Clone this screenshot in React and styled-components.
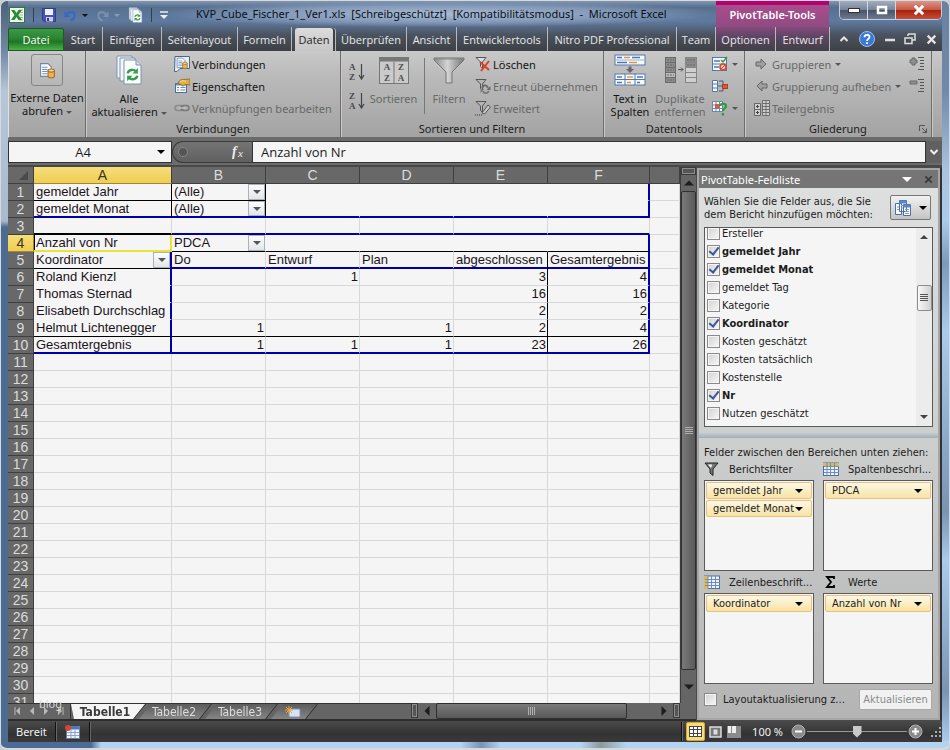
import React from 'react';
import styled, { createGlobalStyle, css } from 'styled-components';

const ui = "'Noto Sans', 'Open Sans', sans-serif";
const tabFont = "'Open Sans', 'Noto Sans', sans-serif";
const paneFont = "'DejaVu Sans Condensed', 'DejaVu Sans', sans-serif";
const cellFont = "'Liberation Sans', Arial, sans-serif";

const GlobalStyle = createGlobalStyle`
  * { box-sizing: border-box; }
  body { margin: 0; background: #c9cdd2; overflow: hidden; }
  button, input { font: inherit; color: inherit; margin: 0; padding: 0; }
  button { background: none; border: 0; }
  svg { display: block; flex: none; }
`;

/* ---------- window ---------- */

const Window = styled.div`
  height: 100vh;
  display: flex;
  flex-direction: column;
  padding: 0 7px 6px;
  border: 1px solid #d5dae0;
  border-bottom-width: 2px;
  border-radius: 7px;
  font-family: ${ui};
  font-size: 11px;
  color: #1c1c1c;
  background:
    linear-gradient(90deg, #4c6c96 0, #4c6c96 90px, #b4d3f0 100px, #b4d3f0 460px, #7893b4 480px, #b4d3f0 500px, #b4d3f0 580px, #8a9a9a 600px, #b4d3f0 625px, #b4d3f0) 0 100% / 100% 7px no-repeat,
    linear-gradient(180deg, #4d5f78 0, #7187a5 50px, #b7c6d8 90px, #aab9cc 220px, #4b6b92 226px, #4b6b92 100%) 0 0 / 8px 100% no-repeat,
    linear-gradient(180deg, #6b81a0 0, #7189ab 90px, #aac3df 170px, #a9cbee 220px, #7b9abd 262px, #a9cbee 330px, #7a94b3 510px, #a9cbee 560px, #7a94b3 690px, #a9cbee 740px) 100% 0 / 8px 100% no-repeat,
    #5b7392;
`;

const Chrome = styled.header`
  flex: none;
  background: linear-gradient(180deg, #8596af 0, #56708f 6px, #5f7aa0 20px, #4a535f 34px, #3e4044 50px);
`;

const TitleBar = styled.div`
  display: flex;
  height: 26px;
`;

const QuickAccess = styled.div`
  display: flex;
  flex: none;
  align-items: center;
  gap: 8px;
  width: 157px;
  padding: 2px 0 0 1px;
`;

const QuickButton = styled.button`
  display: flex;
  align-items: center;
  gap: 5px;
  opacity: ${p => (p.$dim ? 0.45 : 1)};
`;

const Divider = styled.i`
  width: 1px;
  height: 14px;
  background: #aab4c2;
  border-right: 1px solid #333d4b;
`;

const Title = styled.h1`
  flex: 1;
  min-width: 0;
  margin: 0;
  padding: 1px 0 0 31px;
  font-size: 11px;
  line-height: 24px;
  font-weight: 400;
  white-space: pre;
  color: #0a0f18;
  background: radial-gradient(ellipse at 50% 50%, #a9bbd3 0, #8399b8 45%, transparent 72%);
`;

const PivotTitle = styled.div`
  flex: none;
  width: 113px;
  height: 29px;
  margin-bottom: -3px;
  border-top: 4px solid #b5006e;
  background: linear-gradient(180deg, #a94d8e, #8d4a80);
  color: #fff;
  font-weight: 600;
  font-size: 11px;
  line-height: 20px;
  text-align: center;
`;

const WindowButtons = styled.div`
  display: flex;
  flex: none;
  width: 103px;
  height: 19px;
  margin: 0 0 0 10px;
  border: 1px solid #c5cbd5;
  border-top: 0;
  border-radius: 0 0 5px 5px;
  overflow: hidden;
`;

const WindowButton = styled.button`
  flex: ${p => (p.$close ? 46 : 28)};
  display: grid;
  place-items: center;
  border-right: 1px solid #d3d7de;
  background: ${p =>
    p.$close
      ? 'linear-gradient(180deg, #d9968a 0, #c55a46 48%, #a8220f 52%, #c4503a 100%)'
      : 'linear-gradient(180deg, #a3adbd 0, #77849a 48%, #4a5468 52%, #6d7a90 100%)'};
  &:last-child { border: 0; }
`;

const TabRow = styled.nav`
  display: flex;
  height: 24px;
  font-family: ${tabFont};
  color: #e6e8eb;
`;

const Tab = styled.button`
  flex: none;
  width: ${p => p.$w}px;
  padding-top: 1px;
  text-align: center;
  white-space: nowrap;
  border-right: 1px solid #b5b8bd;
  ${p => p.$pivot && css`background: linear-gradient(180deg, #854a7c, #5a4560 45%, #414046);`}
  ${p =>
    p.$active &&
    css`
      margin: 1px 3px 0 3px;
      padding: 0;
      background: linear-gradient(180deg, #dcdcdc, #c6c6c6);
      color: #1d1d1d;
      border-radius: 3px 3px 0 0;
      border: 0;
      box-shadow: 2px 0 0 #3e4044, 3px 0 0 #b5b8bd;
    `}
  ${p =>
    p.$file &&
    css`
      background: linear-gradient(180deg, #3c9a45 0, #2b8432 45%, #1f7526 60%, #4bb04a 100%);
      border: 1px solid #1c5a20;
      border-radius: 2px 2px 0 0;
      color: #fff;
      margin-top: 1px;
      padding: 0;
    `}
`;

const TabTools = styled.div`
  flex: 1;
  display: flex;
  justify-content: space-between;
  align-items: center;
  padding: 0 5px 0 9px;
`;

/* ---------- ribbon ---------- */

const Ribbon = styled.section`
  flex: none;
  display: flex;
  height: 87px;
  border-left: 1px solid #e0e0e0;
  border-bottom: 1px solid #6b6b6b;
  background: linear-gradient(180deg, #c9c9c9 0, #bababa 30%, #a3a3a3 100%);
`;

const Group = styled.div`
  flex: none;
  display: flex;
  flex-direction: column;
  width: ${p => p.$w}px;
  border-right: 1px solid #6d6d6d;
  box-shadow: 1px 0 0 #c9c9c9;
  padding-top: 2px;
`;

const GroupBody = styled.div`
  display: flex;
  height: 67px;
  padding-left: ${p => p.$pad || 0}px;
`;

const GroupLabel = styled.div`
  display: flex;
  justify-content: center;
  line-height: 17px;
  position: relative;
`;

const Launcher = styled.span`
  position: absolute;
  right: 4px;
  top: 5px;
`;

const BigButton = styled.button`
  display: flex;
  flex-direction: column;
  align-items: center;
  flex: none;
  width: ${p => p.$w}px;
  line-height: 13px;
  text-align: center;
  white-space: nowrap;
  color: ${p => (p.$off ? '#686868' : '#151515')};
`;

const IconSlot = styled.span`
  display: grid;
  place-items: center;
  height: ${p => (p.$framed ? 32 : 34)}px;
  width: 32px;
  margin-bottom: 5px;
  ${p => p.$framed && css`border: 1px solid #858585; border-radius: 3px; margin-top: 1px;`}
`;

const Stack = styled.div`
  display: flex;
  flex-direction: column;
  flex: ${p => (p.$grow ? 1 : 'none')};
  gap: ${p => p.$gap || 0}px;
  padding: ${p => p.$pad || 0};
`;

const SmallButton = styled.button`
  display: flex;
  align-items: center;
  gap: 2px;
  height: 22px;
  white-space: nowrap;
  color: ${p => (p.$off ? '#686868' : '#151515')};
`;

const Rule = styled.i`
  width: 1px;
  height: 56px;
  margin: 5px 5px 0 2px;
  background: #777;
`;

const Caret = styled.i`
  display: inline-block;
  flex: none;
  border: solid transparent;
  border-width: ${p => p.$s || 3}px ${p => p.$s || 3}px 0;
  border-top-color: ${p => p.$c || '#555'};
  vertical-align: middle;
  margin-left: ${p => p.$gap || 0}px;
`;

/* ---------- formula bar ---------- */

const FormulaBar = styled.div`
  flex: none;
  display: flex;
  height: 29px;
  padding: 3px 0 2px;
  background: #6b6b6b;
  border-bottom: 2px solid #484848;
  font-family: ${tabFont};
`;

const NameBox = styled.div`
  display: flex;
  align-items: center;
  width: 164px;
  padding-right: 6px;
  background: #f5f5f5;
  border: 1px solid #333;
  input {
    flex: 1;
    min-width: 0;
    border: 0;
    background: none;
    text-align: center;
    font-size: 13px;
  }
`;

const FxArea = styled.div`
  display: flex;
  align-items: center;
  justify-content: space-between;
  width: 80px;
  padding: 0 6px 0 4px;
  border-radius: 11px 0 0 11px;
  border: 1px solid #3b3b3b;
  border-right: 0;
  background: linear-gradient(180deg, #747474, #606060);
`;

const FormulaInput = styled.input`
  flex: 1;
  min-width: 0;
  && {
    padding-left: 8px;
    font-size: 13px;
  }
  border: 1px solid #333;
  background: #f5f5f5;
`;

const Expand = styled.button`
  width: 16px;
  display: grid;
  place-items: center;
  background: #606060;
`;

/* ---------- sheet ---------- */

const Workspace = styled.main`
  flex: 1;
  min-height: 0;
  display: flex;
  background: #666;
`;

const Book = styled.section`
  flex: 1;
  min-width: 0;
  display: flex;
  flex-direction: column;
`;

const BookTop = styled.div`
  flex: 1;
  min-height: 0;
  display: flex;
`;

const SheetView = styled.div`
  flex: 1;
  min-width: 0;
  overflow: hidden;
  background: #f5f5f5;
`;

const Grid = styled.table`
  width: 100%;
  table-layout: fixed;
  border-collapse: separate;
  border-spacing: 0;
  font-family: ${cellFont};
  font-size: 13px;
  line-height: 15px;
  color: #1a1420;
`;

const ColHead = styled.th`
  height: 17px;
  padding: 0;
  font-size: 14px;
  line-height: 16px;
  font-weight: 400;
  color: ${p => (p.$on ? '#3a3320' : '#dcdcdc')};
  background: ${p => (p.$on ? 'linear-gradient(180deg, #f5de7a, #f0cd52)' : '#686868')};
  border-right: 1px solid #3f3f3f;
  border-bottom: 1px solid ${p => (p.$on ? '#a8862c' : '#3f3f3f')};
`;

const RowHead = styled(ColHead)`
  ${p => p.$on && css`border-right-color: #a8862c;`}
`;

const lineColors = { k: '#000', K: '#000', b: '#0000a8', g: '#d6d8da', n: '#f5f5f5', y: '#e8e337' };
const isThick = code => 'Kby'.includes(code);
const line = code => `${isThick(code) ? 2 : 1}px solid ${lineColors[code]}`;

const Cell = styled.td`
  height: 17px;
  padding: 0 ${p => (p.$num ? 1 : 2)}px;
  text-align: ${p => (p.$num ? 'right' : 'left')};
  white-space: nowrap;
  overflow: hidden;
  border-right: ${p => line(p.$r)};
  border-bottom: ${p => line(p.$b)};
  ${p => p.$active && css`box-shadow: inset 1px 0 0 #000;`}
  line-height: ${p => (isThick(p.$b) ? 15 : 16)}px;
`;

const CellBox = styled.div`
  display: flex;
  justify-content: space-between;
  height: ${p => (p.$thick ? 15 : 16)}px;
  margin-right: -2px;
`;

const DropButton = styled.button`
  display: grid;
  place-items: center;
  width: 17px;
  border: 1px solid #a9b1ba;
  background: linear-gradient(180deg, #fdfdfd, #e2e5e9);
`;

const VScroll = styled.div`
  flex: none;
  display: flex;
  flex-direction: column;
  width: 16px;
  background: #656565;
  border-left: 1px solid #3d3d3d;
`;

const Splitter = styled.i`
  display: block;
  flex: none;
  width: ${p => (p.$tall ? 7 : 15)}px;
  height: ${p => (p.$tall ? 15 : 8)}px;
  border: 2px solid #8c8c8c;
  outline: 1px solid #3a3a3a;
  outline-offset: -1px;
  background: #555;
`;

const ScrollButton = styled.button`
  display: grid;
  place-items: center;
  flex: none;
  width: ${p => p.$w || 15}px;
  height: ${p => p.$h || 16}px;
  ${p => p.$end && css`justify-content: end; padding-right: 4px;`}
`;

const Thumb = styled.div`
  display: grid;
  place-items: center;
  flex: ${p => (p.$w ? `0 0 ${p.$w}px` : '1')};
  border: 1px solid #2f2f2f;
  border-radius: 2px;
  background: linear-gradient(${p => (p.$w ? '180deg' : '90deg')}, #7a7a7a, #595959);
`;

const BookBottom = styled.div`
  flex: none;
  display: flex;
  height: 18px;
  background: #656565;
  border-bottom: 2px solid #2d2d2d;
`;

const SheetNav = styled.div`
  position: relative;
  display: flex;
  flex: none;
  align-items: center;
  justify-content: space-between;
  width: 63px;
  padding: 0 6px 2px;
  border-top: 1px solid #333;
  border-right: 1px solid #333;
`;

const Watermark = styled.span`
  position: absolute;
  left: 31px;
  top: -7px;
  font-size: 11px;
  line-height: 14px;
  color: #d8d8d8;
`;

const SheetTabs = styled.div`
  flex: 1;
  display: flex;
  border-top: 1px solid #333;
  font-family: ${paneFont};
  filter: drop-shadow(1px 0 0 #2b2b2b);
`;

const SheetTab = styled.button`
  width: ${p => p.$w}px;
  height: 15px;
  margin-right: -6px;
  padding-right: ${p => (p.$on ? 6 : 2)}px;
  line-height: 14px;
  font-size: 12px;
  font-weight: ${p => (p.$on ? 700 : 400)};
  color: ${p => (p.$on ? '#3a3a3a' : '#dcdcdc')};
  background: ${p => (p.$on ? '#f5f5f5' : 'linear-gradient(180deg, #5c5c5c, #858585)')};
  clip-path: ${p =>
    p.$on
      ? 'polygon(0 0, 100% 0, calc(100% - 12px) 100%, 3px 100%)'
      : 'polygon(12px 0, 100% 0, calc(100% - 12px) 100%, 0 100%)'};
  display: flex;
  justify-content: center;
  align-items: center;
`;

/* ---------- field list ---------- */

const Pane = styled.aside`
  flex: none;
  display: flex;
  flex-direction: column;
  width: 246px;
  border: 1px solid #4a4a4a;
  border-right: 2px solid #333;
  background: linear-gradient(180deg, #dfe0e0 0, #cfd0d0 45%, #b4b4b4 100%);
  box-shadow: inset 0 0 0 2px #a6a6a6;
  padding: 2px;
  font-family: ${paneFont};
`;

const PaneHead = styled.div`
  display: flex;
  align-items: center;
  gap: 12px;
  height: 18px;
  padding: 0 5px 0 2px;
  background: #757575;
  color: #fff;
  font-family: ${ui};
  h2 { flex: 1; margin: 0; font-size: 11px; font-weight: 400; }
`;

const PaneBody = styled.div`
  flex: 1;
  display: flex;
  flex-direction: column;
  padding: 7px 5px 0;
`;

const Prompt = styled.div`
  display: flex;
  justify-content: space-between;
  height: 32px;
  line-height: 13px;
  white-space: nowrap;
  p { margin: 0; }
`;

const LayoutButton = styled.button`
  display: flex;
  align-items: center;
  justify-content: center;
  gap: 8px;
  width: 41px;
  height: 25px;
  margin-right: 2px;
  border: 1px solid #777;
  border-radius: 2px;
  background: linear-gradient(180deg, #f2f2f2, #c4c4c4);
`;

const FieldBox = styled.div`
  display: flex;
  height: 200px;
  border: 1px solid #5a5a5a;
  background: #f5f5f5;
  overflow: hidden;
`;

const Fields = styled.ul`
  flex: 1;
  list-style: none;
  margin: -4px 0 0;
  padding: 0 0 0 2px;
`;

const Field = styled.li`
  height: 18px;
  label {
    display: flex;
    align-items: center;
    gap: 2px;
    height: 18px;
    font-weight: ${p => (p.$on ? 700 : 400)};
  }
`;

const Check = styled.input.attrs({ type: 'checkbox' })`
  appearance: none;
  flex: none;
  display: grid;
  place-items: center;
  width: 13px;
  height: 13px;
  border: 1px solid #8a8a8a;
  background: linear-gradient(135deg, #d2d2d2, #f8f8f8);
  box-shadow: inset 0 0 0 1px #f4f4f4;
  &:checked::after {
    content: '';
    width: 4px;
    height: 8px;
    border: solid #3e539b;
    border-width: 0 2px 2px 0;
    transform: rotate(38deg);
    margin-top: -2px;
  }
`;

const FieldScroll = styled.div`
  display: flex;
  flex-direction: column;
  align-items: center;
  justify-content: space-between;
  width: 16px;
  padding: 5px 0;
  background: #ececec;
`;

const FieldThumb = styled.div`
  display: grid;
  place-items: center;
  width: 15px;
  height: 26px;
  margin-bottom: 58px;
  border: 1px solid #8e8e8e;
  border-radius: 2px;
  background: linear-gradient(90deg, #f8f8f8, #d0d0d0);
`;

const Bar = styled.hr`
  width: calc(100% + 10px);
  margin: 6px -5px 7px;
  height: 5px;
  border: 0;
  flex: none;
  background: linear-gradient(180deg, #c4cbd2, #a4adb6);
`;

const DragHint = styled.p`
  margin: 0;
  line-height: 15px;
  white-space: nowrap;
`;

const Areas = styled.div`
  display: grid;
  grid-template-columns: 110px 110px;
  column-gap: 9px;
`;

const AreaHead = styled.h3`
  display: flex;
  align-items: center;
  gap: 9px;
  height: 20px;
  margin: 0;
  padding-bottom: 2px;
  font-size: 11px;
  font-weight: 400;
  white-space: nowrap;
  span { width: 16px; }
`;

const AreaBox = styled.div`
  height: 91px;
  margin-bottom: 2px;
  padding: 1px;
  border: 1px solid #5a5a5a;
  background: #f5f5f5;
`;

const Chip = styled.button`
  display: flex;
  align-items: center;
  justify-content: space-between;
  width: 100%;
  height: 17px;
  margin-bottom: 1px;
  padding: 0 8px 0 6px;
  border: 1px solid #ecc07a;
  border-radius: 2px;
  background: linear-gradient(180deg, #fdf8e6, #f8e3a4);
  white-space: nowrap;
`;

const PaneFoot = styled.div`
  display: flex;
  align-items: center;
  gap: 6px;
  margin-top: 3px;
  white-space: nowrap;
  label { flex: 1; }
  button {
    width: 73px;
    height: 21px;
    margin-right: 1px;
    border: 1px solid #a9a9a9;
    border-radius: 2px;
    background: #f1f1f1;
    color: #8a8a8a;
  }
`;

/* ---------- status bar ---------- */

const StatusBar = styled.footer`
  flex: none;
  display: flex;
  align-items: center;
  gap: 8px;
  height: 21px;
  padding-left: 8px;
  background: linear-gradient(180deg, #4a4a4a, #333 60%, #3a3a3a);
  color: #f0f0f0;
`;

const StatusSep = styled.i`
  width: 2px;
  height: 19px;
  background: #111;
  border-right: 1px solid #666;
`;

const ViewButton = styled.button`
  display: grid;
  place-items: center;
  width: ${p => (p.$on ? 19 : 15)}px;
  height: 19px;
  border-radius: 2px;
  ${p => p.$on && css`background: #f7dc7c; border: 1px solid #d9a532;`}
`;

const Views = styled.div`
  display: flex;
  gap: 3px;
  margin: 0 3px 0 auto;
`;

const Zoom = styled.div`
  display: flex;
  align-items: center;
  gap: 1px;
`;

const Slider = styled.input.attrs({ type: 'range' })`
  appearance: none;
  width: 100px;
  height: 14px;
  background: linear-gradient(#999, #999) 0 50% / 100% 1px no-repeat;
  &::-webkit-slider-thumb {
    appearance: none;
    width: 9px;
    height: 12px;
    background: #c9c9c9;
    clip-path: polygon(0 0, 100% 0, 100% 65%, 50% 100%, 0 65%);
  }
`;

/* ---------- icons ---------- */

const Svg = ({ w = 16, h = w, vb, children, ...rest }) => (
  <svg width={w} height={h} viewBox={vb || `0 0 ${w} ${h}`} fill="none" aria-hidden="true" {...rest}>
    {children}
  </svg>
);

const ExcelIcon = () => (
  <Svg w={16}>
    <rect x="0.500" y="0.500" width="15" height="15" fill="#f4f8f2" stroke="#2f7a35" />
    <path d="M10 3h4M10 5.500h4M10 8h4M10 10.500h4M10 13h4" stroke="#8fc08f" />
    <path d="M2 3h3.500l2 3 2-3H13L9.300 8l3.700 5H9.500l-2-3-2 3H2l3.500-5z" fill="#2c8a35" />
  </Svg>
);

const SaveIcon = () => (
  <Svg w={14}>
    <path d="M0.500 0.500h13v13H2l-1.500-1.500z" fill="#4655b4" stroke="#2e3c8c" />
    <rect x="3" y="1" width="8" height="6" fill="#eef1fa" />
    <rect x="4" y="9" width="7" height="4.500" fill="#c9d0e6" />
    <rect x="5" y="10" width="2" height="3" fill="#303c88" />
  </Svg>
);

const UndoIcon = ({ flip }) => (
  <Svg w={13} vb="0 0 14 14">
    <g transform={flip ? 'matrix(-1 0 0 1 14 0)' : undefined}>
      <path d="M3 6.500C5 2.500 11.500 2 11.500 7c0 2.500-2 4.500-4.500 5.500" stroke={flip ? '#aab' : '#3467cc'} strokeWidth="2.200" />
      <path d="M0.500 2.500v6h6z" fill={flip ? '#aab' : '#3467cc'} />
    </g>
  </Svg>
);

const Cycle = ({ t }) => (
  <g transform={t} strokeWidth="2" stroke="#33a04a">
    <path d="M1 4.500C1.500 1.500 6 0.500 8 3" />
    <path d="M9.500 0v4.500H5z" fill="#33a04a" stroke="none" />
    <path d="M9 6.500C8.500 9.500 4 10.500 2 8" />
    <path d="M0.500 11V6.500H5z" fill="#33a04a" stroke="none" />
  </g>
);

const RefreshIcon = ({ big }) => (
  <Svg w={big ? 28 : 15} h={big ? 30 : 16} vb="0 0 26 30">
    <path d="M1 1h15v22H1z" fill="#f3f6fa" stroke="#8193ab" />
    <path d="M4 3h15v23H4z" fill="#f3f6fa" stroke="#8193ab" />
    <path d="M8 5h12l5 5v19H8z" fill="#fcfdfe" stroke="#8193ab" />
    <path d="M20 5v5h5" fill="#d7e0ec" stroke="#8193ab" />
    <Cycle t="translate(10.500 13) scale(1.200)" />
  </Svg>
);

const DataIcon = ({ s = 16, frame }) => (
  <Svg w={s} vb="0 0 16 16">
    {frame && <path d="M1 0.500h14.500v12H6l-3 3H0.500z" fill="#e7eef8" stroke="#4f6787" />}
    <g transform={frame ? 'translate(2 1) scale(.78)' : undefined}>
      <path d="M1.500 1.500h7l3 3v9h-10z" fill="#fafcff" stroke="#74869e" />
      <path d="M3 5h5M3 7h5M3 9h5M3 11h5" stroke="#6a93c9" />
      <path d="M8.500 8v5.500c0 2 6 2 6 0V8" fill="#e9b45c" stroke="#a86c1e" />
      <ellipse cx="11.500" cy="8" rx="3" ry="1.500" fill="#f6d79c" stroke="#a86c1e" />
    </g>
  </Svg>
);

const PropsIcon = () => (
  <Svg w={16}>
    <rect x="1.500" y="5.500" width="11" height="9" fill="#f7faff" stroke="#4f6f9b" />
    <path d="M2 6.500h10" stroke="#5f8cc8" strokeWidth="2" />
    <path d="M3 9.500h2M6.500 9.500h5M3 12h2M6.500 12h5" stroke="#5f8cc8" />
    <path d="M4 5c1-3 4-4 6-3.500l6-.5v6l-4-.5L9 8z" fill="#e0ae3e" stroke="#8a6418" strokeWidth=".8" />
    <path d="M6 4c2-1.500 4-1.500 6-.5" stroke="#f9e3a0" />
  </Svg>
);

const LinkIcon = () => (
  <Svg w={16}>
    <rect x="1" y="5.500" width="8" height="5" rx="2.500" stroke="#8b8b8b" strokeWidth="1.500" />
    <rect x="7" y="5.500" width="8" height="5" rx="2.500" stroke="#777" strokeWidth="1.500" />
    <path d="M5 8h6" stroke="#d6d6d6" />
  </Svg>
);

const SortIcon = ({ a, b }) => (
  <Svg w={16} h={18}>
    <g fill="#4a4a4a" fontFamily="'Liberation Serif', serif" fontWeight="700" fontSize="9">
      <text x="0" y="7">{a}</text>
      <text x="0" y="17">{b}</text>
    </g>
    <path d="M12.500 1v14M10 12l2.500 4 2.500-4" stroke="#444" strokeWidth="1.200" />
  </Svg>
);

const SortDialogIcon = () => (
  <Svg w={30} h={27}>
    <rect x="0.500" y="0.500" width="29" height="26" fill="#cacaca" stroke="#777" />
    <path d="M1 2.500h28" stroke="#777" strokeWidth="4" />
    <path d="M15 5v21" stroke="#777" />
    <g fill="#4e4e4e" fontFamily="'Liberation Serif', serif" fontWeight="700" fontSize="9" textAnchor="middle">
      <text x="8" y="13">A</text>
      <text x="8" y="24">Z</text>
      <text x="22" y="13">Z</text>
      <text x="22" y="24">A</text>
    </g>
  </Svg>
);

const FilterIcon = () => (
  <Svg w={32} h={28}>
    <defs>
      <linearGradient id="funnel" x1="0" x2="1">
        <stop offset="0" stopColor="#8a8a8a" />
        <stop offset=".45" stopColor="#d4d4d4" />
        <stop offset="1" stopColor="#757575" />
      </linearGradient>
    </defs>
    <path d="M1 2h30v2L19 16v11h-6V16L1 4z" fill="url(#funnel)" stroke="#777" />
    <path d="M1 3h30" stroke="#868686" />
  </Svg>
);

const FunnelSmall = ({ kind }) => (
  <Svg w={16}>
    <path d="M1 1.500h10L7.500 6v6l-2-1.500V6z" fill={kind ? '#b5b5b5' : '#ddd'} stroke="#555" />
    {!kind && <path d="M5 6l9 8M14 5l-8 10" stroke="#de3e22" strokeWidth="2" />}
    {kind === 'redo' && (
      <g>
        <path d="M7 10c2-4 5-3 6 0" stroke="#6a6a6a" strokeWidth="2" />
        <path d="M15.500 8v4h-4z" fill="#6a6a6a" />
        <path d="M14 13c-2 3-5 3-6 0" stroke="#7d7d7d" strokeWidth="2" />
        <path d="M5.500 15v-4h4z" fill="#7d7d7d" />
      </g>
    )}
    {kind === 'adv' && (
      <g>
        <path d="M7 13l6-8 2.500 2-6 7z" fill="#c8c8c8" stroke="#555" />
        <path d="M0 15h8" stroke="#333" strokeDasharray="1 1" />
      </g>
    )}
  </Svg>
);

const SplitIcon = () => (
  <Svg w={32} h={32}>
    <rect x="1" y="1" width="30" height="10" fill="#f5f8fc" stroke="#5678a8" />
    <path d="M1 6h30" stroke="#9fb4d1" />
    <path d="M3 3.500h5M18 3.500h8M3 8.500h10" stroke="#4c78bd" strokeWidth="1.500" />
    <path d="M10 3.500h6M15 8.500h8" stroke="#e49733" strokeWidth="1.500" />
    <path d="M14.500 12.500h3v2.500h2.500L16 19l-4-4h2.500z" fill="#666" />
    <rect x="1" y="20" width="30" height="11" fill="#f5f8fc" stroke="#5678a8" />
    <path d="M1 25.500h30M11 20v11M21 20v11" stroke="#5678a8" />
    <path d="M3 23h5M23 23h6M3 28.500h5M23 28.500h3" stroke="#4c78bd" strokeWidth="1.500" />
    <path d="M13 23h6M13 28.500h4" stroke="#e49733" strokeWidth="1.500" />
  </Svg>
);

const DuplicateIcon = () => (
  <Svg w={34} h={30}>
    {[0, 5, 10, 15, 20].map((y, i) => (
      <g key={y}>
        <rect x="1.500" y={2.5 + y} width="10" height="5" fill={i === 3 ? '#bbb' : '#8c8c8c'} stroke="#6a6a6a" />
        <rect x="21.500" y={2.5 + y} width="11" height="5" fill={i > 1 ? '#cfcfcf' : '#8c8c8c'} stroke="#858585" />
        <path d={`M3 ${5 + y}h7`} stroke="#666" strokeDasharray="2 1" />
        {i < 2 && <path d={`M23 ${5 + y}h8`} stroke="#666" strokeDasharray="2 1" />}
      </g>
    ))}
    <path d="M14 14.500h5M17 12.500l2 2-2 2" stroke="#555" />
  </Svg>
);

const ValidateIcon = () => (
  <Svg w={16}>
    <rect x="0.500" y="1.500" width="14" height="13" fill="#f5f8fc" stroke="#5678a8" />
    <path d="M1 8h13" stroke="#5678a8" />
    <path d="M2 5h6M2 11h5" stroke="#4c78bd" strokeWidth="1.500" />
    <path d="M9 4l2 2 4-5" stroke="#2f9a3c" strokeWidth="1.500" />
    <circle cx="11" cy="11" r="3" fill="#f6d0c4" stroke="#d6452a" strokeWidth="1.500" />
    <path d="M9 13l4-4" stroke="#d6452a" />
  </Svg>
);

const ConsolidateIcon = () => (
  <Svg w={16}>
    <path d="M0.500 2.500h5v11h-5zM0.500 6h5M0.500 10h5" fill="#f5f8fc" stroke="#5678a8" />
    <path d="M7 3h4v3M7 13h4v-3M6 8h4" stroke="#3f5c86" />
    <rect x="10.500" y="6.500" width="5" height="4" fill="#e5552f" stroke="#b33c1b" />
  </Svg>
);

const WhatIfIcon = () => (
  <Svg w={16}>
    <rect x="0.500" y="1.500" width="10" height="10" fill="#f5f8fc" stroke="#6d87ad" />
    <path d="M1 5h10M1 8.500h10M4 1.500v10M7.500 1.500v10" stroke="#6d87ad" />
    <rect x="3" y="4" width="4" height="4" fill="#e5552f" />
    <path d="M8 6c0-3 6-3 6 0 0 2.500-3 2.500-3 5M11 13v2.500" stroke="#2f9a3c" strokeWidth="2.200" />
  </Svg>
);

const ArrowIcon = ({ left }) => (
  <Svg w={16} vb="0 0 16 14">
    <path d={left ? 'M13 5H8V2L3 7l5 5V9h5z' : 'M2 5h5V2l5 5-5 5V9H2z'} fill="#a0a0a0" stroke="#666" />
  </Svg>
);

const SubtotalIcon = () => (
  <Svg w={16}>
    <path d="M0.500 3.500h6v12h-6zM0.500 9.500h6" fill="#d0d0d0" stroke="#666" />
    <path d="M2 6.500h3M3.500 5v3M2 12.500h3M3.500 11v3" stroke="#444" />
    <path d="M8.500 0.500h7v15h-7zM8.500 3.500h7M8.500 6.500h7M8.500 9.500h7M8.500 12.500h7M12 0.500v15" fill="#d0d0d0" stroke="#6d6d6d" />
  </Svg>
);

const DetailIcon = ({ plus }) => (
  <Svg w={16}>
    <path d={plus ? 'M3 2h3v2h2v3H6v2H3V7H1V4h2z' : 'M1 3h7v3H1z'} fill="#8f8f8f" stroke="#6a6a6a" />
    <path d="M9 1.500h6M11 4.500h4M11 7.500h4M11 10.500h4M9 13.500h6" stroke="#555" />
  </Svg>
);

const TableIcon = ({ rows }) => (
  <Svg w={16} h={14} vb="0 0 16 14">
    <rect x="0.500" y="1" width="15" height="12.500" fill="#eef4fc" stroke="#4f6fa3" />
    <path d={rows ? 'M0 1h4v13H0z' : 'M0 1h16v3H0z'} fill="#dbb955" />
    <path d="M4 1v12.500M7.500 1v12.500M11.500 1v12.500M1 4.500h15M1 7.500h15M1 10.500h15" stroke="#6f8cbb" />
  </Svg>
);

const FunnelPane = () => (
  <Svg w={16} h={14}>
    <path d="M1 1h13L9 7v6.500L6 11V7z" fill="#777" stroke="#222" />
    <path d="M4 2.500h4L7 6z" fill="#fff" />
  </Svg>
);

const SigmaIcon = () => (
  <Svg w={16} h={14}>
    <path d="M11 4V2H4l4 5-4 5h7v-2" stroke="#000" strokeWidth="1.800" />
  </Svg>
);

const LayoutIcon = () => (
  <Svg w={16}>
    <path d="M0.500 3.500h6v11h-6zM4.500 0.500h7v11h-7zM8.500 4.500h7v11h-7z" fill="#f7faff" stroke="#4c6fa5" />
    <path d="M4.500 2h7M8.500 6h7" stroke="#5b86c9" strokeWidth="3" />
    <path d="M10 9.500h4M10 11.500h4M10 13.500h4M2 7h2M2 9.500h2M6 5.500h2M6 8h2" stroke="#7f9cc8" />
  </Svg>
);

const Chevron = ({ dir, c = '#1d1d1d', s = 8 }) => (
  <Svg w={s} vb="0 0 8 8">
    <path d={{ up: 'M0 6l4-4 4 4z', down: 'M0 2l4 4 4-4z', left: 'M6 0L2 4l4 4z', right: 'M2 0l4 4-4 4z' }[dir]} fill={c} />
  </Svg>
);

const NavIcon = ({ left, end }) => (
  <Svg w={8} vb="0 0 8 8">
    <path d={left ? 'M6 0L2 4l4 4z' : 'M2 0l4 4-4 4z'} fill="#b9b9b9" />
    {end && <path d={left ? 'M1 0v8' : 'M7 0v8'} stroke="#b9b9b9" />}
  </Svg>
);

const Cross = ({ s = 10, c = '#fff', w = 2 }) => (
  <Svg w={s} vb="0 0 10 10">
    <path d="M1.500 1.500l7 7M8.500 1.500l-7 7" stroke={c} strokeWidth={w} />
  </Svg>
);

const GripIcon = ({ vertical, c = '#b0b0b0' }) => (
  <Svg w={8} vb="0 0 8 8">
    <path d={vertical ? 'M.5 0v8M2.500 0v8M4.500 0v8M6.500 0v8' : 'M0 .5h8M0 2.500h8M0 4.500h8M0 6.500h8'} stroke={c} />
  </Svg>
);

const RoundIcon = ({ plus }) => (
  <Svg w={15} vb="0 0 15 15">
    <circle cx="7.500" cy="7.500" r="6.500" fill="#8a8a8a" stroke="#b0b0b0" />
    <path d={plus ? 'M4 7.500h7M7.500 4v7' : 'M4 7.500h7'} stroke="#fff" strokeWidth="2" />
  </Svg>
);

/* ---------- data ---------- */

const columns = [
  ['A', 138],
  ['B', 94],
  ['C', 94],
  ['D', 94],
  ['E', 94],
  ['F', 102],
  ['', null],
];

// right and bottom line of each cell: g grid, k black, K thick black, b blue, y marker, n none
const rows = [
  { v: ['gemeldet Jahr', '(Alle)'], r: 'kknnnbg', b: 'kknnnng', drop: 1 },
  { v: ['gemeldet Monat', '(Alle)'], r: 'kknnnbg', b: 'bbbbbbg', drop: 1 },
  { v: [], r: 'ggggggg', b: 'Kbbbbbg' },
  { v: ['Anzahl von Nr', 'PDCA'], r: 'ynnnnbg', b: 'ykkkkkg', drop: 1, active: true },
  { v: ['Koordinator', 'Do', 'Entwurf', 'Plan', 'abgeschlossen', 'Gesamtergebnis'], r: 'bgggkbg', b: 'kbbbbbg', drop: 0 },
  { v: ['Roland Kienzl', '', '1', '', '3', '4'], r: 'bgggkbg', b: 'ngggggg' },
  { v: ['Thomas Sternad', '', '', '', '16', '16'], r: 'bgggkbg', b: 'ngggggg' },
  { v: ['Elisabeth Durchschlag', '', '', '', '2', '2'], r: 'bgggkbg', b: 'ngggggg' },
  { v: ['Helmut Lichtenegger', '1', '', '1', '2', '4'], r: 'bgggkbg', b: 'kkkkkkg' },
  { v: ['Gesamtergebnis', '1', '1', '1', '23', '26'], r: 'bgggkbg', b: 'bbbbbbg' },
  ...Array.from({ length: 21 }, () => ({ v: [], r: 'ggggggg', b: 'ggggggg' })),
];

const fields = [
  ['Ersteller'],
  ['gemeldet Jahr', true],
  ['gemeldet Monat', true],
  ['gemeldet Tag'],
  ['Kategorie'],
  ['Koordinator', true],
  ['Kosten geschätzt'],
  ['Kosten tatsächlich'],
  ['Kostenstelle'],
  ['Nr', true],
  ['Nutzen geschätzt'],
];

const areas = [
  ['Berichtsfilter', <FunnelPane />, ['gemeldet Jahr', 'gemeldet Monat']],
  ['Spaltenbeschri...', <TableIcon />, ['PDCA']],
  ['Zeilenbeschrift...', <TableIcon rows />, ['Koordinator']],
  ['Werte', <SigmaIcon />, ['Anzahl von Nr']],
];

const tabs = [
  { t: 'Datei', w: 56, file: true },
  { t: 'Start', w: 39 },
  { t: 'Einfügen', w: 59 },
  { t: 'Seitenlayout', w: 76 },
  { t: 'Formeln', w: 54 },
  { t: 'Daten', w: 38, active: true },
  { t: 'Überprüfen', w: 71 },
  { t: 'Ansicht', w: 50 },
  { t: 'Entwicklertools', w: 91 },
  { t: 'Nitro PDF Professional', w: 129 },
  { t: 'Team', w: 39 },
  { t: 'Optionen', w: 60, pivot: true },
  { t: 'Entwurf', w: 54, pivot: true },
];

/* ---------- parts ---------- */

const Header = () => (
  <Chrome>
    <TitleBar>
      <QuickAccess>
        <ExcelIcon />
        <Divider />
        <QuickButton aria-label="Speichern"><SaveIcon /></QuickButton>
        <QuickButton aria-label="Rückgängig"><UndoIcon /><Caret $c="#111" /></QuickButton>
        <QuickButton aria-label="Wiederholen" $dim><UndoIcon flip /><Caret $c="#ccc" /></QuickButton>
        <QuickButton aria-label="Aktualisieren"><RefreshIcon /></QuickButton>
        <Divider />
        <QuickButton aria-label="Anpassen">
          <Svg w={8} h={10}><path d="M0 2h8" stroke="#eee" strokeWidth="1.500" /><path d="M0 5h8L4 9z" fill="#eee" /></Svg>
        </QuickButton>
      </QuickAccess>
      <Title>{'KVP_Cube_Fischer_1_Ver1.xls  [Schreibgeschützt]  [Kompatibilitätsmodus]  -  Microsoft Excel'}</Title>
      <PivotTitle>PivotTable-Tools</PivotTitle>
      <WindowButtons>
        <WindowButton aria-label="Minimieren"><Svg w={12} h={5}><rect x="0.500" y="0.500" width="11" height="4" fill="#fff" stroke="#333" /></Svg></WindowButton>
        <WindowButton aria-label="Maximieren"><Svg w={12} h={10}><path d="M2 2h8v6H2z" stroke="#fff" strokeWidth="2.500" /></Svg></WindowButton>
        <WindowButton aria-label="Schließen" $close><Cross s={12} w={2.5} /></WindowButton>
      </WindowButtons>
    </TitleBar>
    <TabRow>
      {tabs.map(t => (
        <Tab key={t.t} $w={t.w} $file={t.file} $active={t.active} $pivot={t.pivot}>{t.t}</Tab>
      ))}
      <TabTools>
        <Svg w={10}><path d="M1.500 7L5 3.500 8.500 7" stroke="#e5e5e5" strokeWidth="2" /></Svg>
        <Svg w={16}>
          <circle cx="8" cy="8" r="7.500" fill="#3d78d6" stroke="#9cc0f2" />
          <path d="M5.500 6.200C5.500 3 10.500 3 10.500 6c0 1.800-2.500 2-2.500 4M8 11.300v1.700" stroke="#fff" strokeWidth="1.800" />
        </Svg>
        <Svg w={10}><path d="M0 6h10" stroke="#ddd" strokeWidth="2.500" /></Svg>
        <Svg w={12}><path d="M4 1h7v6H8M4 1v2M1 5h7v5.500H1z" stroke="#ddd" strokeWidth="1.500" /></Svg>
        <Cross c="#e5e5e5" s={11} />
      </TabTools>
    </TabRow>
  </Chrome>
);

const RibbonBar = () => (
  <Ribbon>
    <Group $w={77}>
      <GroupBody>
        <BigButton $w={76}>
          <IconSlot $framed><DataIcon s={17} /></IconSlot>
          <span>Externe Daten</span>
          <span>abrufen <Caret /></span>
        </BigButton>
      </GroupBody>
    </Group>
    <Group $w={255}>
      <GroupBody>
        <BigButton $w={86}>
          <IconSlot><RefreshIcon big /></IconSlot>
          <span>Alle</span>
          <span>aktualisieren <Caret /></span>
        </BigButton>
        <Stack $pad="0 0 0 2px">
          <SmallButton><DataIcon frame />Verbindungen</SmallButton>
          <SmallButton><PropsIcon />Eigenschaften</SmallButton>
          <SmallButton $off disabled><LinkIcon />Verknüpfungen bearbeiten</SmallButton>
        </Stack>
      </GroupBody>
      <GroupLabel>Verbindungen</GroupLabel>
    </Group>
    <Group $w={263}>
      <GroupBody $pad={8}>
        <Stack $gap={11} $pad="10px 0 0">
          <SortIcon a="A" b="Z" />
          <SortIcon a="Z" b="A" />
        </Stack>
        <BigButton $w={57} $off disabled>
          <IconSlot><SortDialogIcon /></IconSlot>
          Sortieren
        </BigButton>
        <Rule />
        <BigButton $w={38} $off disabled>
          <IconSlot><FilterIcon /></IconSlot>
          Filtern
        </BigButton>
        <Stack $pad="0 0 0 7px">
          <SmallButton><FunnelSmall />Löschen</SmallButton>
          <SmallButton $off disabled><FunnelSmall kind="redo" />Erneut übernehmen</SmallButton>
          <SmallButton $off disabled><FunnelSmall kind="adv" />Erweitert</SmallButton>
        </Stack>
      </GroupBody>
      <GroupLabel>Sortieren und Filtern</GroupLabel>
    </Group>
    <Group $w={141}>
      <GroupBody $pad={4}>
        <BigButton $w={44}>
          <IconSlot><SplitIcon /></IconSlot>
          <span>Text in</span>
          <span>Spalten</span>
        </BigButton>
        <BigButton $w={56} $off disabled>
          <IconSlot><DuplicateIcon /></IconSlot>
          <span>Duplikate</span>
          <span>entfernen</span>
        </BigButton>
        <Stack $pad="0 0 0 4px">
          <SmallButton aria-label="Datenüberprüfung"><ValidateIcon /><Caret $gap={2} /></SmallButton>
          <SmallButton aria-label="Konsolidieren"><ConsolidateIcon /></SmallButton>
          <SmallButton aria-label="Was-wäre-wenn-Analyse"><WhatIfIcon /><Caret $gap={2} /></SmallButton>
        </Stack>
      </GroupBody>
      <GroupLabel>Datentools</GroupLabel>
    </Group>
    <Group $w={187}>
      <GroupBody $pad={9}>
        <Stack $grow>
          <SmallButton $off disabled><ArrowIcon />Gruppieren <Caret $gap={2} /></SmallButton>
          <SmallButton $off disabled><ArrowIcon left />Gruppierung aufheben <Caret $gap={2} /></SmallButton>
          <SmallButton $off disabled><SubtotalIcon />Teilergebnis</SmallButton>
        </Stack>
        <Stack $pad="0 6px 0 0">
          <SmallButton aria-label="Detail anzeigen"><DetailIcon plus /></SmallButton>
          <SmallButton aria-label="Detail ausblenden"><DetailIcon /></SmallButton>
        </Stack>
      </GroupBody>
      <GroupLabel>
        Gliederung
        <Launcher><Svg w={8}><path d="M.5 6V.5H6M3 3l4 4M7.500 3.500v4h-4" stroke="#555" /></Svg></Launcher>
      </GroupLabel>
    </Group>
  </Ribbon>
);

const Formula = () => (
  <FormulaBar>
    <NameBox>
      <input aria-label="Namenfeld" defaultValue="A4" />
      <Caret $s={4} $c="#000" />
    </NameBox>
    <FxArea>
      <Svg w={12}><circle cx="6" cy="6" r="4.500" fill="#555" stroke="#888" /></Svg>
      <Svg w={14} h={16}>
        <text x="0" y="12" fill="#eee" fontFamily="'Liberation Serif', serif" fontStyle="italic" fontWeight="700" fontSize="14">f</text>
        <text x="6" y="13" fill="#eee" fontFamily="'Liberation Serif', serif" fontStyle="italic" fontSize="11">x</text>
      </Svg>
    </FxArea>
    <FormulaInput aria-label="Bearbeitungsleiste" defaultValue="Anzahl von Nr" />
    <Expand aria-label="Erweitern"><Svg w={10}><path d="M1.500 3L5 6.500 8.500 3" stroke="#eee" strokeWidth="2" /></Svg></Expand>
  </FormulaBar>
);

const SheetTable = () => (
  <Grid>
    <colgroup>
      <col width={26} />
      {columns.map(([name, w]) => <col key={name} width={w || undefined} />)}
    </colgroup>
    <thead>
      <tr>
        <ColHead><Svg w={22} h={14}><path d="M20 3v9H11z" fill="#4a4a4a" /></Svg></ColHead>
        {columns.map(([name]) => <ColHead key={name} $on={name === 'A'}>{name}</ColHead>)}
      </tr>
    </thead>
    <tbody>
      {rows.map((row, i) => (
        <tr key={i}>
          <RowHead scope="row" $on={i === 3}>{i + 1}</RowHead>
          {columns.map(([name], c) => {
            const value = row.v[c] || '';
            return (
              <Cell key={name} $r={row.r[c]} $b={row.b[c]} $num={/^\d/.test(value)} $active={row.active && c === 0}>
                {row.drop === c ? (
                  <CellBox $thick={isThick(row.b[c])}>
                    {value}
                    <DropButton aria-label={`Filter ${value}`}><Caret $s={4} $c="#555" /></DropButton>
                  </CellBox>
                ) : value}
              </Cell>
            );
          })}
        </tr>
      ))}
    </tbody>
  </Grid>
);

const Workbook = () => (
  <Book>
    <BookTop>
      <SheetView><SheetTable /></SheetView>
      <VScroll>
        <Splitter />
        <ScrollButton aria-label="Nach oben"><Chevron dir="up" s={10} /></ScrollButton>
        <Thumb><GripIcon /></Thumb>
        <ScrollButton $h={33} aria-label="Nach unten"><Chevron dir="down" s={10} /></ScrollButton>
      </VScroll>
    </BookTop>
    <BookBottom>
      <SheetNav>
        <NavIcon left end /><NavIcon left /><NavIcon /><NavIcon end />
        <Watermark>blog</Watermark>
      </SheetNav>
      <SheetTabs>
        <SheetTab $w={74} $on>Tabelle1</SheetTab>
        <SheetTab $w={72}>Tabelle2</SheetTab>
        <SheetTab $w={72}>Tabelle3</SheetTab>
        <SheetTab $w={46} aria-label="Tabellenblatt einfügen">
          <Svg w={16} h={12}><rect x="4" y="3" width="11" height="8" rx="1" fill="#d6e3f5" stroke="#7b93b8" /><path d="M4 0v8M0 4h8M1 1l6 6M7 1L1 7" stroke="#f0a52c" /></Svg>
        </SheetTab>
      </SheetTabs>
      <Splitter $tall />
      <ScrollButton $w={18} aria-label="Nach links"><Chevron dir="left" s={10} /></ScrollButton>
      <Thumb $w={191}><GripIcon vertical /></Thumb>
      <ScrollButton $w={46} $end aria-label="Nach rechts"><Chevron dir="right" s={10} /></ScrollButton>
      <Splitter $tall />
      <ScrollButton as="span" $w={16} />
    </BookBottom>
  </Book>
);

const FieldList = () => (
  <Pane>
    <PaneHead>
      <h2>PivotTable-Feldliste</h2>
      <Caret $s={5} $c="#fff" />
      <Cross s={9} c="#3b3b3b" />
    </PaneHead>
    <PaneBody>
      <Prompt>
        <p>Wählen Sie die Felder aus, die Sie<br />dem Bericht hinzufügen möchten:</p>
        <LayoutButton aria-label="Layout"><LayoutIcon /><Caret $s={4} $c="#000" /></LayoutButton>
      </Prompt>
      <FieldBox>
        <Fields>
          {fields.map(([name, on]) => (
            <Field key={name} $on={on}>
              <label><Check defaultChecked={on} />{name}</label>
            </Field>
          ))}
        </Fields>
        <FieldScroll>
          <Chevron dir="up" c="#444" />
          <FieldThumb><GripIcon c="#555" /></FieldThumb>
          <Chevron dir="down" c="#444" />
        </FieldScroll>
      </FieldBox>
      <Bar />
      <DragHint>Felder zwischen den Bereichen unten ziehen:</DragHint>
      <Areas>
        {[0, 2].map(n => (
          <React.Fragment key={n}>
            {areas.slice(n, n + 2).map(([name, icon]) => <AreaHead key={name}><span>{icon}</span>{name}</AreaHead>)}
            {areas.slice(n, n + 2).map(([name, , chips]) => (
              <AreaBox key={name}>
                {chips.map(chip => <Chip key={chip}>{chip}<Caret $s={4} $c="#000" /></Chip>)}
              </AreaBox>
            ))}
          </React.Fragment>
        ))}
      </Areas>
      <PaneFoot>
        <Check id="defer" />
        <label htmlFor="defer">Layoutaktualisierung z...</label>
        <button disabled>Aktualisieren</button>
      </PaneFoot>
    </PaneBody>
  </Pane>
);

const Status = () => (
  <StatusBar>
    Bereit
    <StatusSep />
    <Svg w={16} h={14}>
      <rect x="1.500" y="1.500" width="13" height="12" fill="#f2f6fc" stroke="#5f7fae" />
      <path d="M2 3h12" stroke="#4c78bd" strokeWidth="3" />
      <path d="M2 7.500h12M2 10.500h12M6 5v8M10 5v8" stroke="#8aa4cc" />
      <circle cx="3" cy="3" r="3" fill="#d8452c" />
    </Svg>
    <StatusSep />
    <Views>
      <StatusSep />
      <ViewButton $on aria-label="Normal"><Svg w={13} h={11}><rect x=".5" y=".5" width="12" height="10" fill="#fff" stroke="#444" /><path d="M0 3.500h13M0 7.500h13M4.500 0v11M8.500 0v11" stroke="#444" /></Svg></ViewButton>
      <ViewButton aria-label="Seitenlayout"><Svg w={13} h={12}><rect x="1" y="1" width="11" height="10" fill="#777" stroke="#ddd" strokeWidth="1.500" /><path d="M4.500 3.500h4v5h-4z" fill="#ddd" /></Svg></ViewButton>
      <ViewButton aria-label="Umbruchvorschau"><Svg w={14} h={12}><rect width="14" height="12" fill="#8a8a8a" /><path d="M1 0h3v7H1zM5 0h4v7H5z" fill="#eee" /></Svg></ViewButton>
    </Views>
    <span>100 %</span>
    <Zoom>
      <RoundIcon />
      <Slider aria-label="Zoom" defaultValue={50} />
      <RoundIcon plus />
    </Zoom>
    <Svg w={11} h={14}><path d="M8 3h2M8 7h2M4 7h2M8 11h2M4 11h2M0 11h2" stroke="#aaa" strokeWidth="2" /></Svg>
  </StatusBar>
);

const App = () => (
  <Window>
    <GlobalStyle />
    <Header />
    <RibbonBar />
    <Formula />
    <Workspace>
      <Workbook />
      <FieldList />
    </Workspace>
    <Status />
  </Window>
);

export default App;
